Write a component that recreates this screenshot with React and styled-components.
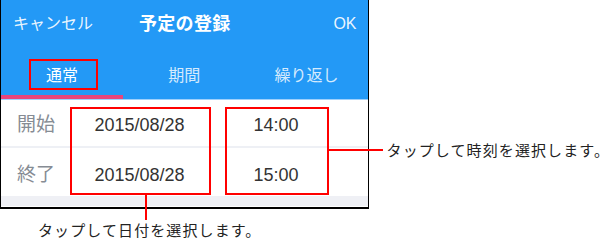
import React from "react"
import styled, { createGlobalStyle } from "styled-components"

const GlobalStyle = createGlobalStyle`
  html, body {
    margin: 0;
    padding: 0;
    background: #fff;
  }
  body {
    font-family: "Liberation Sans", "Noto Sans CJK JP", sans-serif;
  }
`

const Page = styled.div`
  width: 610px;
  height: 240px;
  display: flex;
  flex-direction: column;
  overflow: hidden;
`

const TopRow = styled.div`
  display: flex;
  align-items: flex-start;
`

const Frame = styled.div`
  position: relative;
  box-sizing: border-box;
  width: 370px;
  height: 209px;
  border: 1px solid #000;
  border-top: none;
  border-bottom-width: 2px;
  background: #fff;
`

const Header = styled.div`
  background: #2399f6;
  border-bottom: 1px solid #9fd0fb;
`

const TitleBar = styled.div`
  height: 50px;
  display: grid;
  grid-template-columns: 1fr auto 1fr;
  align-items: center;
  padding: 0 11px 2px 12px;
  box-sizing: border-box;
  color: #fff;
`

const BarButton = styled.span`
  font-size: 16px;
  line-height: 20px;
  color: rgba(255, 255, 255, 0.92);
  justify-self: ${p => (p.$right ? "end" : "start")};
`

const Title = styled.span`
  font-size: 18px;
  font-weight: bold;
  line-height: 22px;
  letter-spacing: 0.3px;
`

const Tabs = styled.div`
  display: flex;
  height: 49px;
`

const Tab = styled.div`
  position: relative;
  flex: 1;
  display: flex;
  align-items: center;
  justify-content: center;
  box-sizing: border-box;
  padding-top: 6px;
  font-size: 16px;
  line-height: 20px;
  color: ${p => (p.$active ? "#fff" : "rgba(255, 255, 255, 0.82)")};
  border-bottom: 4px solid ${p => (p.$active ? "#e8457c" : "transparent")};
`

const Highlight = styled.div`
  position: absolute;
  box-sizing: border-box;
  border: 2px solid #f00;
`

const TabMark = styled(Highlight)`
  left: 28px;
  top: 9px;
  width: 69px;
  height: 31px;
`

const Rows = styled.div`
  position: relative;
`

const Row = styled.div`
  display: flex;
  align-items: center;
  height: 48px;
  box-sizing: border-box;
  padding-top: ${p => (p.$first ? "3px" : "6px")};
  border-bottom: ${p => (p.$first ? "2px solid #eef0f5" : "none")};
`

const Label = styled.div`
  width: 69px;
  box-sizing: border-box;
  padding-left: 16px;
  font-size: 19px;
  line-height: 24px;
  color: #868c94;
`

const DateValue = styled.div`
  width: 139px;
  text-align: center;
  font-size: 18px;
  line-height: 22px;
  color: #333;
`

const TimeValue = styled.div`
  width: 102px;
  margin-left: 16px;
  text-align: center;
  font-size: 18px;
  line-height: 22px;
  color: #333;
`

const Footer = styled.div`
  height: 10px;
  background: #eff0f5;
`

const DateMark = styled(Highlight)`
  left: 69px;
  top: 7px;
  width: 141px;
  height: 88px;

  &::after {
    content: "";
    position: absolute;
    left: 73px;
    top: 86px;
    width: 2px;
    height: 25px;
    background: #f00;
  }
`

const TimeMark = styled(Highlight)`
  left: 224px;
  top: 7px;
  width: 104px;
  height: 88px;

  &::after {
    content: "";
    position: absolute;
    left: 102px;
    top: 40px;
    width: 54px;
    height: 2px;
    background: #f00;
  }
`

const Note = styled.div`
  font-family: "Noto Sans CJK JP", sans-serif;
  font-size: 15px;
  line-height: 18px;
  letter-spacing: 1.1px;
  color: #222;
  white-space: nowrap;
`

const RightNote = styled(Note)`
  margin-left: 18px;
  padding-top: 141px;
`

const BottomNote = styled(Note)`
  margin-top: 12px;
  padding-left: 38px;
`

const rows = [
  { label: "開始", date: "2015/08/28", time: "14:00" },
  { label: "終了", date: "2015/08/28", time: "15:00" },
]

const tabs = ["通常", "期間", "繰り返し"]

const App = () => (
  <Page>
    <GlobalStyle />
    <TopRow>
      <Frame>
        <Header>
          <TitleBar>
            <BarButton>キャンセル</BarButton>
            <Title>予定の登録</Title>
            <BarButton $right>OK</BarButton>
          </TitleBar>
          <Tabs>
            {tabs.map((t, i) => (
              <Tab key={t} $active={i === 0}>
                {t}
                {i === 0 && <TabMark />}
              </Tab>
            ))}
          </Tabs>
        </Header>
        <Rows>
          {rows.map((r, i) => (
            <Row key={r.label} $first={i === 0}>
              <Label>{r.label}</Label>
              <DateValue>{r.date}</DateValue>
              <TimeValue>{r.time}</TimeValue>
            </Row>
          ))}
          <DateMark />
          <TimeMark />
        </Rows>
        <Footer />
      </Frame>
      <RightNote>タップして時刻を選択します。</RightNote>
    </TopRow>
    <BottomNote>タップして日付を選択します。</BottomNote>
  </Page>
)

export default App
